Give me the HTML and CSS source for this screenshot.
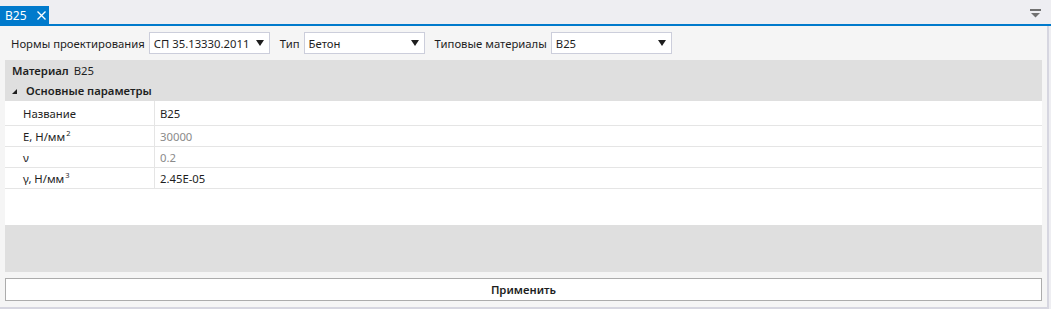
FILE: index.html
```html
<!DOCTYPE html>
<html>
<head>
<meta charset="utf-8">
<link rel="stylesheet" href="styles.css">
</head>
<body>
<div class="window">
  <div class="tabbar">
    <div class="tab"><span class="tab-title">B25</span><svg class="tab-close" width="9" height="9" viewBox="0 0 9 9"><path d="M0.5 0.5 L8.5 8.5 M8.5 0.5 L0.5 8.5" stroke="#fff" stroke-width="1.3"/></svg></div>
    <div class="tab-spacer"></div>
    <svg class="tab-menu" width="12" height="10" viewBox="0 0 12 10"><rect x="0" y="0" width="11" height="2" fill="#717171"/><path d="M1 4 H10 L5.5 8.5 Z" fill="#717171"/></svg>
  </div>
  <div class="accent"></div>
  <div class="content">
    <div class="toolbar">
      <span class="label">Нормы проектирования</span>
      <div class="select"><span>СП 35.13330.2011</span><span class="arrow"></span></div>
      <span class="label">Тип</span>
      <div class="select"><span>Бетон</span><span class="arrow"></span></div>
      <span class="label">Типовые материалы</span>
      <div class="select"><span>B25</span><span class="arrow"></span></div>
    </div>
    <div class="grid">
      <div class="grid-head">
        <div class="title"><b>Материал</b> B25</div>
        <div class="category"><span class="tri"></span><b>Основные параметры</b></div>
      </div>
      <div class="rows">
        <div class="row first"><div class="name">Название</div><div class="value">B25</div></div>
        <div class="row"><div class="name">E, Н/мм<sup>2</sup></div><div class="value ro">30000</div></div>
        <div class="row"><div class="name">ν</div><div class="value ro">0.2</div></div>
        <div class="row"><div class="name">γ, Н/мм<sup>3</sup></div><div class="value">2.45E-05</div></div>
      </div>
      <div class="desc"></div>
    </div>
    <div class="btn">Применить</div>
  </div>
</div>
</body>
</html>
```
FILE: styles.css
```css
html, body {
  margin: 0;
  padding: 0;
  background: #eeeef2;
}
body {
  font-family: "Noto Sans", "Open Sans", sans-serif;
  font-size: 11.3px;
  color: #1e1e1e;
  width: 1051px;
  height: 309px;
  overflow: hidden;
}
.window {
  width: 1049px;
  height: 307px;
  display: flex;
  flex-direction: column;
  border-bottom: 2px solid #d6d6e0;
}
.tabbar {
  height: 24px;
  display: flex;
  align-items: flex-end;
  background: #eeeef2;
}
.tab {
  height: 18px;
  width: 49px;
  background: #007acc;
  color: #fff;
  display: flex;
  align-items: center;
  box-sizing: border-box;
  padding-left: 5px;
  font-size: 12px;
}
.tab-title { margin-right: 10px; }
.tab-close { display: block; }
.tab-spacer { flex: 1; }
.tab-menu { margin: 0 7px 5px 0; }
.accent {
  height: 2px;
  background: #007acc;
  width: 1051px;
}
.content {
  flex: 1;
  background: #f5f5f5;
  border-right: 2px solid #d6d6e0;
  display: flex;
  flex-direction: column;
  padding: 6px 4px 0 5px;
}
.toolbar {
  display: flex;
  align-items: center;
  height: 22px;
  padding-left: 6px;
}
.label {
  color: #1e1e1e;
  margin-right: 4px;
}
.select {
  height: 22px;
  box-sizing: border-box;
  border: 1px solid #cccedb;
  background: #fff;
  display: flex;
  align-items: center;
  justify-content: space-between;
  padding: 0 5px 0 4px;
  width: 121px;
  margin-right: 10px;
}
.arrow {
  width: 0;
  height: 0;
  border-left: 4px solid transparent;
  border-right: 4px solid transparent;
  border-top: 6px solid #1e1e1e;
}
.grid {
  margin-top: 6px;
  margin-right: 1px;
  display: flex;
  flex-direction: column;
  height: 212px;
}
.grid-head {
  background: #dfdfdf;
  height: 41px;
}
.title {
  height: 21px;
  line-height: 22px;
  padding-left: 7px;
}
.title b { font-weight: 600; margin-right: 2px; }
.category {
  height: 20px;
  line-height: 20px;
  display: flex;
  align-items: center;
}
.category b { font-weight: 600; margin-left: 9px; }
.tri {
  margin-left: 7px;
  width: 0;
  height: 0;
  border-left: 5px solid transparent;
  border-bottom: 5px solid #1e1e1e;
}
.rows {
  background: #fff;
  height: 124px;
}
.row {
  display: flex;
  height: 21px;
  border-bottom: 1px solid #e5e5e5;
  box-sizing: border-box;
  align-items: center;
}
.row.first { height: 25px; }
.name {
  width: 150px;
  height: 100%;
  border-right: 1px solid #e5e5e5;
  padding-left: 18px;
  box-sizing: border-box;
  display: flex;
  align-items: center;
}
.value {
  padding-left: 5px;
}
.value.ro { color: #8a8a8a; }
sup { font-size: 7.5px; position: relative; top: -3px; vertical-align: baseline; line-height: 0; margin-left: 1px; }
.desc {
  flex: 1;
  background: #dfdfdf;
}
.btn {
  margin-top: 6px;
  margin-right: 1px;
  height: 23px;
  box-sizing: border-box;
  border: 1px solid #acacac;
  background: #fff;
  display: flex;
  align-items: center;
  justify-content: center;
  font-weight: 600;
}
```
